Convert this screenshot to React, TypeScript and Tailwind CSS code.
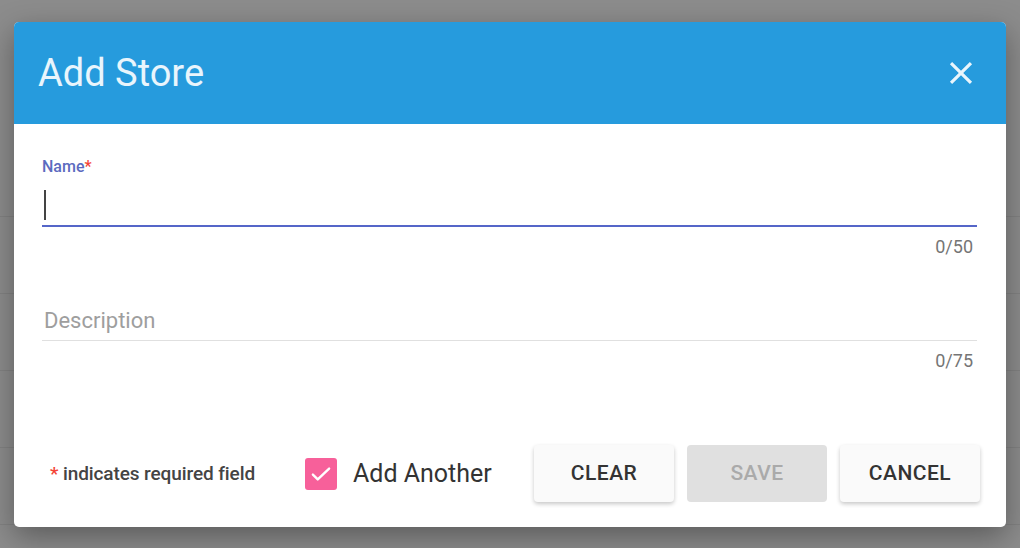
import { useState } from 'react'

const bgRows = [0, 1, 2, 3, 4]

function CloseIcon() {
  return (
    <svg width="38" height="38" viewBox="0 0 24 24" fill="currentColor">
      <path d="M19 6.41 17.59 5 12 10.59 6.41 5 5 6.41 10.59 12 5 17.59 6.41 19 12 13.41 17.59 19 19 17.59 13.41 12z" />
    </svg>
  )
}

function Counter({ text }: { text: string }) {
  return <div className="text-right text-[18px] leading-[20px] text-[#757575] pr-[4px]">{text}</div>
}

export default function App() {
  const [addAnother, setAddAnother] = useState(true)

  return (
    <div className="relative h-[548px] w-[1020px] overflow-hidden bg-[#8c8c8c] font-['Roboto',sans-serif]">
      {/* page behind the overlay */}
      <div className="pt-[140px]">
        {bgRows.map(r => (
          <div key={r} className="h-[77px] border-b border-[#828282]" />
        ))}
      </div>

      {/* dialog */}
      <div className="absolute left-[14px] top-[22px] w-[992px] h-[505px] rounded-[5px] bg-white shadow-[0_10px_30px_rgba(0,0,0,0.35)] overflow-hidden flex flex-col">
        <div className="h-[102px] bg-[#269bdd] flex items-center justify-between pl-[24px] pr-[26px] shrink-0">
          <h1 className="text-[38px] leading-[44px] text-white/90 font-normal">Add Store</h1>
          <button className="text-white/90">
            <CloseIcon />
          </button>
        </div>

        <div className="pl-[28px] pr-[29px] pt-[33px]">
          <label className="block text-[16px] leading-[20px] font-medium text-[#5c6bc0]">
            Name<span className="text-[#f44336]">*</span>
          </label>
          <div className="h-[48px] flex items-end pb-[5px] pl-[2px]">
            <div className="w-[2px] h-[30px] bg-[#444]" />
          </div>
          <div className="h-[2px] bg-[#5566c8]" />
          <div className="mt-[10px]">
            <Counter text="0/50" />
          </div>

          <div className="mt-[39px] h-[44px] flex items-end pb-[6px] pl-[2px]">
            <span className="text-[22px] leading-[26px] text-[#9e9e9e]">Description</span>
          </div>
          <div className="h-px bg-[#e0e0e0]" />
          <div className="mt-[10px]">
            <Counter text="0/75" />
          </div>
        </div>

        <div className="mt-auto flex items-center pl-[36px] pr-[26px] pb-[25px]">
          <div className="text-[19px] leading-[22px] font-medium text-[#444] tracking-[-0.1px]">
            <span className="text-[#f44336]">*</span> indicates required field
          </div>
          <button
            type="button"
            onClick={() => setAddAnother(a => !a)}
            className="ml-[50px] flex items-center gap-[16px]"
          >
            <span className={`w-[32px] h-[32px] rounded-[3px] flex items-center justify-center ${addAnother ? 'bg-[#f7609a]' : 'border-2 border-[#777]'}`}>
              {addAnother && (
                <svg width="26" height="26" viewBox="0 0 24 24" fill="none" stroke="white" strokeWidth="2.2" strokeLinecap="round" strokeLinejoin="round">
                  <path d="M4.5 12.5l4.5 4.5L19.5 7" />
                </svg>
              )}
            </span>
            <span className="text-[25px] leading-[30px] text-[#333]">Add Another</span>
          </button>
          <div className="ml-auto flex gap-[13px]">
            <button className="w-[140px] h-[57px] rounded-[4px] bg-[#fafafa] shadow-[0_2px_4px_rgba(0,0,0,0.22)] text-[21px] font-medium tracking-[0.5px] text-[#333]">
              CLEAR
            </button>
            <button disabled className="w-[140px] h-[57px] rounded-[4px] bg-[#e0e0e0] text-[21px] font-medium tracking-[0.5px] text-[#aaa]">
              SAVE
            </button>
            <button className="w-[140px] h-[57px] rounded-[4px] bg-[#fafafa] shadow-[0_2px_4px_rgba(0,0,0,0.22)] text-[21px] font-medium tracking-[0.5px] text-[#333]">
              CANCEL
            </button>
          </div>
        </div>
      </div>
    </div>
  )
}
